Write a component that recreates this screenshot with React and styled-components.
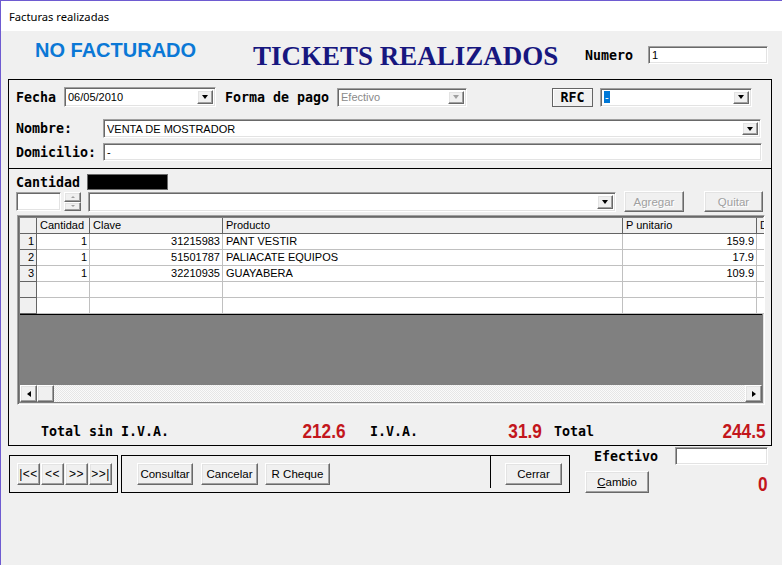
import React from "react";
import styled, { createGlobalStyle, css } from "styled-components";

const GlobalStyle = createGlobalStyle`
  html, body { margin: 0; padding: 0; background: #f0f0f0; }
  body { font-family: "Liberation Sans", Arial, sans-serif; }
`;

const sunken = css`
  box-sizing: border-box;
  border: 1px solid;
  border-color: #a0a0a0 #ffffff #ffffff #a0a0a0;
  box-shadow: inset 1px 1px 0 #696969, inset -1px -1px 0 #e3e3e3;
`;

const raised = css`
  box-sizing: border-box;
  border: 1px solid;
  border-color: #ffffff #696969 #696969 #ffffff;
  box-shadow: inset -1px -1px 0 #a0a0a0, inset 1px 1px 0 #e3e3e3;
  background: #f0f0f0;
`;

const Window = styled.div`
  width: 782px;
  height: 565px;
  box-sizing: border-box;
  border-left: 1px solid #6e5bd1;
  border-top: 1px solid #6e5bd1;
  background: #f0f0f0;
  display: flex;
  flex-direction: column;
  overflow: hidden;
`;

const TitleBar = styled.div`
  height: 30px;
  flex: none;
  background: #ffffff;
  display: flex;
  align-items: center;
  padding-left: 8px;
  font-family: "Noto Sans", "Liberation Sans", sans-serif;
  font-size: 11.2px;
  color: #000;
`;

const Header = styled.div`
  height: 48px;
  flex: none;
  display: flex;
  align-items: center;
`;

const NoFacturado = styled.div`
  width: 218px;
  margin-left: 34px;
  margin-bottom: 10px;
  font: bold 20px "Liberation Sans", Arial, sans-serif;
  color: #0b78d6;
`;

const Title = styled.div`
  width: 332px;
  font: bold 27px "Liberation Serif", "Times New Roman", serif;
  color: #17177f;
  margin-top: 2px;
`;

const MonoLabel = styled.span`
  font: bold 13.3px "DejaVu Sans Mono", "Liberation Mono", monospace;
  color: #000;
  white-space: pre;
  flex: none;
  width: ${(p) => (p.$w ? `${p.$w}px` : "auto")};
  margin-left: ${(p) => p.$ml || 0}px;
`;

const TextBox = styled.div`
  ${sunken};
  background: #ffffff;
  width: ${(p) => p.$w}px;
  height: ${(p) => p.$h || 18}px;
  margin-left: ${(p) => p.$ml || 0}px;
  flex: none;
  display: flex;
  align-items: center;
  padding-left: 3px;
  font-size: 11px;
  color: #000;
`;

const ComboBox = styled.div`
  ${sunken};
  background: #ffffff;
  width: ${(p) => p.$w}px;
  height: ${(p) => p.$h || 19}px;
  margin-left: ${(p) => p.$ml || 0}px;
  flex: none;
  display: flex;
  align-items: center;
  padding: 2px 2px 2px 3px;
  font-size: 11px;
  color: ${(p) => (p.$disabled ? "#8a8a8a" : "#000")};
`;

const ComboText = styled.span`
  flex: 1;
  white-space: nowrap;
  overflow: hidden;
`;

const Selected = styled.span`
  background: #0078d7;
  color: #fff;
  padding: 0 1px;
  line-height: 14px;
`;

const DropButton = styled.div`
  ${raised};
  width: 16px;
  height: 100%;
  flex: none;
  display: flex;
  align-items: center;
  justify-content: center;
`;

const Arrow = styled.span`
  width: 0;
  height: 0;
  border-left: ${(p) => p.$size || 3.5}px solid transparent;
  border-right: ${(p) => p.$size || 3.5}px solid transparent;
  border-top: ${(p) => (p.$size || 3.5) + 0.5}px solid ${(p) => p.$color || "#000"};
  ${(p) => p.$up && css`transform: rotate(180deg);`}
`;

const SideArrow = styled.span`
  width: 0;
  height: 0;
  border-top: 3.5px solid transparent;
  border-bottom: 3.5px solid transparent;
  ${(p) =>
    p.$dir === "left"
      ? css`border-right: 4px solid #000;`
      : css`border-left: 4px solid #000;`}
`;

const Button = styled.button`
  ${raised};
  width: ${(p) => p.$w}px;
  height: ${(p) => p.$h || 22}px;
  margin-left: ${(p) => p.$ml || 0}px;
  flex: none;
  padding: 0;
  font: 11.5px "Liberation Sans", Arial, sans-serif;
  color: ${(p) => (p.disabled ? "#a0a0a0" : "#000")};
  text-shadow: ${(p) => (p.disabled ? "1px 1px 0 #fff" : "none")};
  cursor: default;
`;

const RfcButton = styled.div`
  box-sizing: border-box;
  width: 41px;
  height: 19px;
  margin-left: ${(p) => p.$ml}px;
  border: 1px solid #646464;
  box-shadow: inset 1px 1px 0 #ffffff;
  display: flex;
  align-items: center;
  justify-content: center;
  font: bold 13.3px "DejaVu Sans Mono", monospace;
`;

const MainBox = styled.div`
  box-sizing: border-box;
  width: 764px;
  height: 367px;
  margin-left: 7px;
  border: 1px solid #000;
  display: flex;
  flex-direction: column;
  flex: none;
`;

const InfoSection = styled.div`
  height: 89px;
  box-sizing: border-box;
  border-bottom: 1px solid #000;
  padding: 7px 0 0 7px;
  flex: none;
`;

const Row = styled.div`
  display: flex;
  align-items: center;
  margin-top: ${(p) => p.$mt || 0}px;
  height: ${(p) => p.$h}px;
  margin-left: ${(p) => p.$ml || 0}px;
`;

const ProductSection = styled.div`
  padding: 6px 0 0 7px;
  flex: 1;
  display: flex;
  flex-direction: column;
`;

const BlackBox = styled.div`
  width: 79px;
  height: 14px;
  background: #000;
  margin-left: ${(p) => p.$ml}px;
  box-shadow: 0 0 0 1px #6b6b6b;
`;

const Spin = styled.div`
  width: 17px;
  height: 19px;
  margin-left: ${(p) => p.$ml}px;
  display: flex;
  flex-direction: column;
`;

const SpinHalf = styled.div`
  ${raised};
  flex: 1;
  display: flex;
  align-items: center;
  justify-content: center;
`;

const Grid = styled.div`
  ${sunken};
  width: 748px;
  height: 190px;
  margin: 3px 0 0 1px;
  padding: 2px;
  display: flex;
  flex-direction: column;
  background: #808080;
  overflow: hidden;
`;

const GridRow = styled.div`
  display: grid;
  grid-template-columns: 17px 53px 133px 400px 134px 40px;
  height: 16px;
  flex: none;
  background: #fff;
  font-size: 11px;
`;

const Cell = styled.div`
  box-sizing: border-box;
  height: 16px;
  line-height: 15px;
  padding: 0 2px 0 3px;
  white-space: nowrap;
  overflow: hidden;
  text-align: ${(p) => p.$align || "left"};
  border-right: 1px solid ${(p) => (p.$head ? "#646464" : "#c0c0c0")};
  border-bottom: 1px solid ${(p) => (p.$head ? "#646464" : "#c0c0c0")};
  background: ${(p) => (p.$head ? "#f0f0f0" : "#fff")};
`;

const GrayArea = styled.div`
  flex: 1;
  border-top: 1px solid #000;
  background: #808080;
`;

const HScroll = styled.div`
  height: 17px;
  flex: none;
  display: flex;
  background-color: #f4f4f4;
  background-image: repeating-conic-gradient(#e6e6e6 0 25%, #fafafa 0 50%);
  background-size: 2px 2px;
`;

const ScrollButton = styled.div`
  ${raised};
  width: 17px;
  height: 17px;
  flex: none;
  display: flex;
  align-items: center;
  justify-content: center;
  margin-left: ${(p) => (p.$end ? "auto" : "0")};
`;

const Totals = styled.div`
  display: flex;
  align-items: center;
  height: 22px;
  margin-top: 15px;
  margin-left: 25px;
`;

const RedValue = styled.span`
  width: ${(p) => p.$w}px;
  text-align: right;
  flex: none;
  margin-top: ${(p) => p.$mt || 0}px;
`;

const RedText = styled.span`
  display: inline-block;
  font: bold 21px "Liberation Sans", Arial, sans-serif;
  color: #c3161c;
  transform: scaleX(0.82);
  transform-origin: right center;
`;

const Footer = styled.div`
  display: flex;
  align-items: flex-start;
  flex: 1;
`;

const GroupBox = styled.div`
  box-sizing: border-box;
  border: 1px solid #000;
  width: ${(p) => p.$w}px;
  height: 38px;
  margin: 9px 0 0 ${(p) => p.$ml}px;
  padding: 7px 0 0 ${(p) => p.$pl}px;
  display: flex;
  align-items: flex-start;
  gap: ${(p) => p.$gap || 0}px;
  flex: none;
`;

const NavButton = styled(Button)`
  font-size: 12px;
  letter-spacing: 0.5px;
`;

const Divider = styled.div`
  width: 1px;
  height: 32px;
  background: #000;
  margin: -7px 0 0 ${(p) => p.$ml}px;
  flex: none;
`;

const CashPanel = styled.div`
  margin-left: 15px;
  width: 183px;
  display: flex;
  flex-direction: column;
`;

const rows = [
  ["1", "1", "31215983", "PANT VESTIR", "159.9"],
  ["2", "1", "51501787", "PALIACATE EQUIPOS", "17.9"],
  ["3", "1", "32210935", "GUAYABERA", "109.9"],
  ["", "", "", "", ""],
  ["", "", "", "", ""],
];

const Combo = ({ w, h, ml, disabled, children }) => (
  <ComboBox $w={w} $h={h} $ml={ml} $disabled={disabled}>
    <ComboText>{children}</ComboText>
    <DropButton>
      <Arrow $color={disabled ? "#a0a0a0" : "#000"} />
    </DropButton>
  </ComboBox>
);

const Amount = ({ w, mt, children }) => (
  <RedValue $w={w} $mt={mt}>
    <RedText>{children}</RedText>
  </RedValue>
);

export default function App() {
  return (
    <>
      <GlobalStyle />
      <Window>
        <TitleBar>Facturas realizadas</TitleBar>
        <Header>
          <NoFacturado>NO FACTURADO</NoFacturado>
          <Title>TICKETS REALIZADOS</Title>
          <MonoLabel $w={63}>Numero</MonoLabel>
          <TextBox $w={120}>1</TextBox>
        </Header>

        <MainBox>
          <InfoSection>
            <Row $h={20}>
              <MonoLabel $w={48}>Fecha</MonoLabel>
              <Combo w={152} h={20}>06/05/2010</Combo>
              <MonoLabel $ml={9} $w={112}>Forma de pago</MonoLabel>
              <Combo w={130} disabled>Efectivo</Combo>
              <RfcButton $ml={85}>RFC</RfcButton>
              <Combo w={152} ml={7}>
                <Selected>-</Selected>
              </Combo>
            </Row>
            <Row $h={19} $mt={12}>
              <MonoLabel $w={87}>Nombre:</MonoLabel>
              <Combo w={658}>VENTA DE MOSTRADOR</Combo>
            </Row>
            <Row $h={18} $mt={5}>
              <MonoLabel $w={87}>Domicilio:</MonoLabel>
              <TextBox $w={659}>-</TextBox>
            </Row>
          </InfoSection>

          <ProductSection>
            <Row $h={14}>
              <MonoLabel $w={64}>Cantidad</MonoLabel>
              <BlackBox $ml={8} />
            </Row>
            <Row $h={21} $mt={2}>
              <TextBox $w={45} $h={19} />
              <Spin $ml={3}>
                <SpinHalf>
                  <Arrow $up $size={2} $color="#a0a0a0" />
                </SpinHalf>
                <SpinHalf>
                  <Arrow $size={2} $color="#a0a0a0" />
                </SpinHalf>
              </Spin>
              <Combo w={528} h={20} ml={7} />
              <Button $w={60} $h={21} $ml={8} disabled>
                Agregar
              </Button>
              <Button $w={59} $h={21} $ml={20} disabled>
                Quitar
              </Button>
            </Row>

            <Grid>
              <GridRow>
                <Cell $head />
                <Cell $head>Cantidad</Cell>
                <Cell $head>Clave</Cell>
                <Cell $head>Producto</Cell>
                <Cell $head>P unitario</Cell>
                <Cell $head>D</Cell>
              </GridRow>
              {rows.map((r, i) => (
                <GridRow key={i}>
                  <Cell $head $align="right">
                    {r[0]}
                  </Cell>
                  <Cell $align="right">{r[1]}</Cell>
                  <Cell $align="right">{r[2]}</Cell>
                  <Cell>{r[3]}</Cell>
                  <Cell $align="right">{r[4]}</Cell>
                  <Cell />
                </GridRow>
              ))}
              <GrayArea />
              <HScroll>
                <ScrollButton>
                  <SideArrow $dir="left" />
                </ScrollButton>
                <ScrollButton />
                <ScrollButton $end>
                  <SideArrow $dir="right" />
                </ScrollButton>
              </HScroll>
            </Grid>

            <Totals>
              <MonoLabel $w={128}>Total sin I.V.A.</MonoLabel>
              <Amount w={177}>212.6</Amount>
              <MonoLabel $ml={24} $w={48}>I.V.A.</MonoLabel>
              <Amount w={124}>31.9</Amount>
              <MonoLabel $ml={12} $w={40}>Total</MonoLabel>
              <Amount w={172}>244.5</Amount>
            </Totals>
          </ProductSection>
        </MainBox>

        <Footer>
          <GroupBox $w={109} $ml={8} $pl={7} $gap={1}>
            <NavButton $w={23}>|&lt;&lt;</NavButton>
            <NavButton $w={23}>&lt;&lt;</NavButton>
            <NavButton $w={23}>&gt;&gt;</NavButton>
            <NavButton $w={23}>&gt;&gt;|</NavButton>
          </GroupBox>
          <GroupBox $w={449} $ml={3} $pl={15}>
            <Button $w={56}>Consultar</Button>
            <Button $w={57} $ml={8}>
              Cancelar
            </Button>
            <Button $w={65} $ml={7}>
              R Cheque
            </Button>
            <Divider $ml={160} />
            <Button $w={57} $ml={14}>
              Cerrar
            </Button>
          </GroupBox>
          <CashPanel>
            <Row $h={18} $mt={1} $ml={9}>
              <MonoLabel $w={81}>Efectivo</MonoLabel>
              <TextBox $w={93} />
            </Row>
            <Row $h={22} $mt={6}>
              <Button $w={64}>
                <u>C</u>ambio
              </Button>
              <Amount w={119} mt={4}>
                0
              </Amount>
            </Row>
          </CashPanel>
        </Footer>
      </Window>
    </>
  );
}
